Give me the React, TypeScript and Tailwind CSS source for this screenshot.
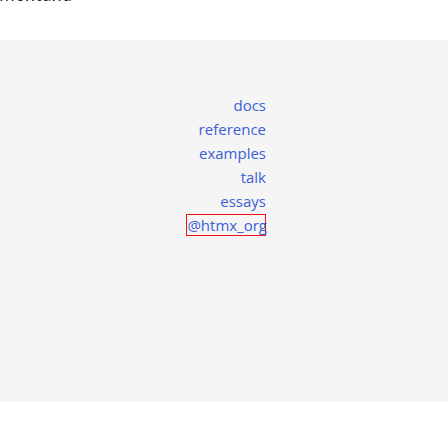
import React from "react";

const links = ["docs", "reference", "examples", "talk", "essays"];

export default function App() {
  return (
    <div className="w-[448px] h-[448px] bg-white font-['Open_Sans',sans-serif] overflow-hidden">
      <div className="h-10 overflow-hidden">
        <div className="-mt-[15px] text-[18px] italic text-[#222] leading-[18px]">montana</div>
      </div>
      <div className="h-[362px] bg-[#f5f5f5] pt-[53px]">
        <div className="w-[266px] flex flex-col items-end text-[15px] leading-6 text-[#3c5fd6]">
          {links.map((l) => (
            <a key={l} href="#" className="block">
              {l}
            </a>
          ))}
          <a href="#" className="block border border-[#e11] leading-5 mt-px">
            <span className="-mr-[2px]">@htmx_org</span>
          </a>
        </div>
      </div>
    </div>
  );
}
